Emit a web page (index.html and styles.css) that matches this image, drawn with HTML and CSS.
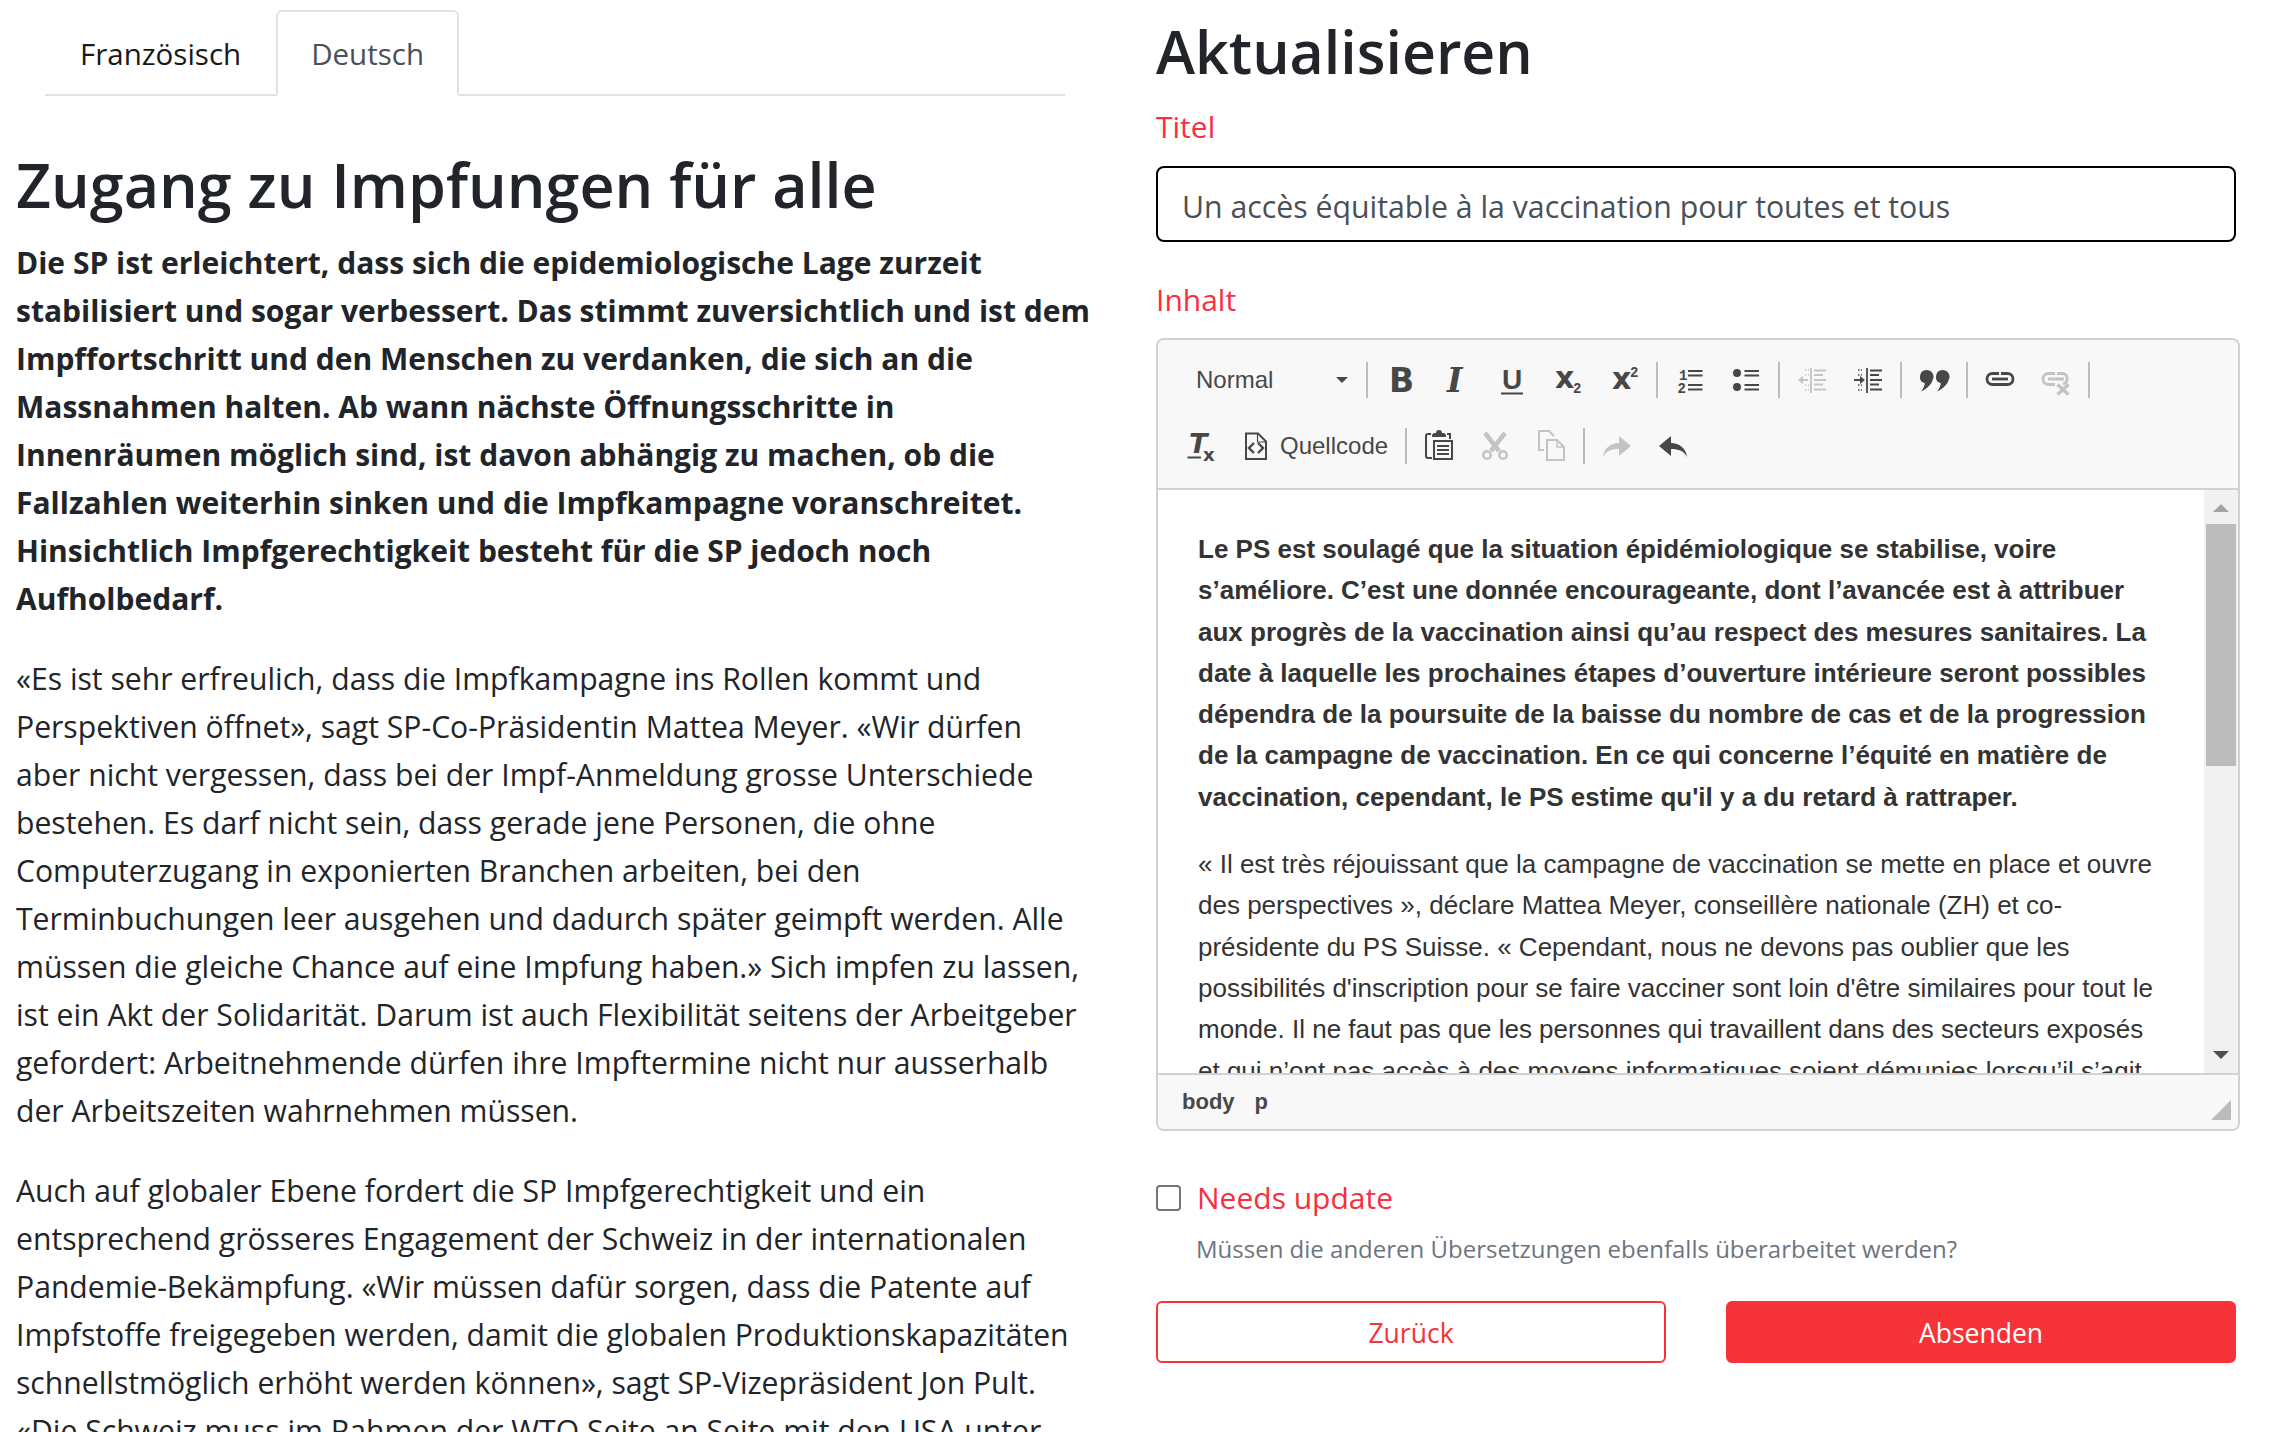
FILE: index.html
```html
<!DOCTYPE html>
<html lang="de">
  <head>
    <meta charset="UTF-8" />
    <title>Aktualisieren</title>
    <link rel="stylesheet" href="styles.css">
  </head>
  <body>
    <main class="page">
      <section class="source">
        <ul class="tabs">
          <li class="tab">Französisch</li>
          <li class="tab active">Deutsch</li>
        </ul>
        <h1 class="source-title">Zugang zu Impfungen für alle</h1>
        <p class="lead">Die SP ist erleichtert, dass sich die epidemiologische Lage zurzeit<br>stabilisiert und sogar verbessert. Das stimmt zuversichtlich und ist dem<br>Impffortschritt und den Menschen zu verdanken, die sich an die<br>Massnahmen halten. Ab wann nächste Öffnungsschritte in<br>Innenräumen möglich sind, ist davon abhängig zu machen, ob die<br>Fallzahlen weiterhin sinken und die Impfkampagne voranschreitet.<br>Hinsichtlich Impfgerechtigkeit besteht für die SP jedoch noch<br>Aufholbedarf.</p>
        <p>«Es ist sehr erfreulich, dass die Impfkampagne ins Rollen kommt und<br>Perspektiven öffnet», sagt SP-Co-Präsidentin Mattea Meyer. «Wir dürfen<br>aber nicht vergessen, dass bei der Impf-Anmeldung grosse Unterschiede<br>bestehen. Es darf nicht sein, dass gerade jene Personen, die ohne<br>Computerzugang in exponierten Branchen arbeiten, bei den<br>Terminbuchungen leer ausgehen und dadurch später geimpft werden. Alle<br>müssen die gleiche Chance auf eine Impfung haben.» Sich impfen zu lassen,<br>ist ein Akt der Solidarität. Darum ist auch Flexibilität seitens der Arbeitgeber<br>gefordert: Arbeitnehmende dürfen ihre Impftermine nicht nur ausserhalb<br>der Arbeitszeiten wahrnehmen müssen.</p>
        <p>Auch auf globaler Ebene fordert die SP Impfgerechtigkeit und ein<br>entsprechend grösseres Engagement der Schweiz in der internationalen<br>Pandemie-Bekämpfung. «Wir müssen dafür sorgen, dass die Patente auf<br>Impfstoffe freigegeben werden, damit die globalen Produktionskapazitäten<br>schnellstmöglich erhöht werden können», sagt SP-Vizepräsident Jon Pult.<br>«Die Schweiz muss im Rahmen der WTO Seite an Seite mit den USA unter</p>
      </section>

      <section class="form">
        <h1 class="form-title">Aktualisieren</h1>
        <label class="label label-title">Titel</label>
        <input class="title-input" type="text" value="Un accès équitable à la vaccination pour toutes et tous">
        <label class="label label-content">Inhalt</label>

        <div class="editor">
          <div class="toolbar">
            <div class="toolbar-row">
              <div class="combo"><span>Normal</span><i class="combo-arrow"></i></div>
              <i class="sep"></i>
              <button class="btn on"><svg viewBox="0 0 32 32"><text x="5" y="28" class="ico-b">B</text></svg></button>
              <button class="btn on"><svg viewBox="0 0 32 32"><text x="7" y="28" class="ico-i">I</text></svg></button>
              <button class="btn on"><svg viewBox="0 0 32 32"><text x="6" y="25" class="ico-u">U</text><path d="M5 29.500h22" stroke="currentColor" stroke-width="2"/></svg></button>
              <button class="btn on"><svg viewBox="0 0 32 32"><text x="3" y="24" class="ico-x">x</text><text x="21" y="29" class="num">2</text></svg></button>
              <button class="btn on"><svg viewBox="0 0 32 32"><text x="4" y="25" class="ico-x">x</text><text x="22" y="13" class="num">2</text></svg></button>
              <i class="sep"></i>
              <button class="btn on"><svg viewBox="0 0 32 32"><text x="5" y="16" class="num">1</text><text x="3.500" y="29" class="num">2</text><path d="M14 7h14.500M14 11.500h14.500M14 21h14.500M14 25.500h14.500" stroke="currentColor" stroke-width="2" fill="none"/></svg></button>
              <button class="btn on"><svg viewBox="0 0 32 32"><circle cx="7" cy="9" r="4" fill="currentColor"/><circle cx="7" cy="23" r="4" fill="currentColor"/><path d="M14.500 7H29M14.500 11.500H29M14.500 21H29M14.500 25.500H29" stroke="currentColor" stroke-width="2" fill="none"/></svg></button>
              <i class="sep"></i>
              <button class="btn off"><svg viewBox="0 0 32 32"><path d="M15 4v25M18 6.500h12M18 11h9M18 16h12M18 20.500h9M18 25.500h12M3 16h9" stroke="currentColor" stroke-width="1.800" fill="none"/><path d="M2 16l5-4v8z" fill="currentColor"/><path d="M9 6h1.500M12 6h1M9 11h1.500M12 11h1M9 21h1.500M12 21h1M9 26h1.500M12 26h1" stroke="currentColor" stroke-width="1.600"/></svg></button>
              <button class="btn on"><svg viewBox="0 0 32 32"><path d="M15 4v25M18 6.500h12M18 11h9M18 16h12M18 20.500h9M18 25.500h12M2 16h8" stroke="currentColor" stroke-width="1.800" fill="none"/><path d="M13 16l-5-4v8z" fill="currentColor"/><path d="M6 6h1.500M9 6h1M6 11h1.500M9 11h1M6 21h1.500M9 21h1M6 26h1.500M9 26h1" stroke="currentColor" stroke-width="1.600"/></svg></button>
              <i class="sep"></i>
              <button class="btn on"><svg viewBox="0 0 32 32"><path d="M8.500 6a6.800 6.800 0 0 1 6.300 9.800C13 21 9 25 3 27.500c2.500-3 3.500-5.500 3.800-8.200A6.800 6.800 0 0 1 8.500 6zM24.500 6a6.800 6.800 0 0 1 6.300 9.800C29 21 25 25 19 27.500c2.500-3 3.500-5.500 3.800-8.200A6.800 6.800 0 0 1 24.500 6z" fill="currentColor"/></svg></button>
              <i class="sep"></i>
              <button class="btn on"><svg viewBox="0 0 32 32"><path d="M15 9.500H8.500a5.500 5.500 0 0 0 0 11H23.500a5.500 5.500 0 0 0 0-11H17" stroke="currentColor" stroke-width="2.800" fill="none"/><path d="M8 15h16" stroke="currentColor" stroke-width="2.800"/></svg></button>
              <button class="btn off"><svg viewBox="0 0 32 32"><path d="M15 9.500H8.500a5.500 5.500 0 0 0 0 11H15M23 20a5.500 5.500 0 0 0 .5-10.500H17M8 15h16" stroke="currentColor" stroke-width="2.800" fill="none"/><path d="M17.500 20.500l11 10M28.500 20.500l-11 10" stroke="currentColor" stroke-width="3.600"/></svg></button>
              <i class="sep"></i>
            </div>
            <div class="toolbar-row">
              <button class="btn on"><svg viewBox="0 0 32 32"><text x="5" y="23" class="ico-t">T</text><path d="M3.500 27.500H17" stroke="currentColor" stroke-width="2"/><text x="19" y="31" class="ico-sx">x</text></svg></button>
              <button class="btn btn-wide on"><svg viewBox="0 0 32 32"><path d="M6 3.500h12l8 8V29H6z" stroke="currentColor" stroke-width="2" fill="none"/><path d="M17.500 3.500v8.500H26" stroke="currentColor" stroke-width="1.200" fill="none"/><path d="M14 13l-5 5 5 5M18 13l5 5-5 5" stroke="currentColor" stroke-width="2.400" fill="none"/></svg><span>Quellcode</span></button>
              <i class="sep"></i>
              <button class="btn on"><svg viewBox="0 0 32 32"><path d="M8 4H5a2 2 0 0 0-2 2v20a2 2 0 0 0 2 2h4M24 4h3v5" stroke="currentColor" stroke-width="2" fill="none"/><path d="M9 6a3 3 0 0 1 3-3h1a3 3 0 0 1 6 0h1a3 3 0 0 1 3 3v1H9z" fill="currentColor"/><path d="M11 11h18v18H11z" stroke="currentColor" stroke-width="2" fill="none"/><path d="M14 16h12M14 20h12M14 24h12" stroke="currentColor" stroke-width="2"/></svg></button>
              <button class="btn off"><svg viewBox="0 0 32 32"><path d="M6 3l14 18M26 3L12 21" stroke="currentColor" stroke-width="4.500" fill="none"/><circle cx="8" cy="25" r="3.800" stroke="currentColor" stroke-width="2.600" fill="none"/><circle cx="24" cy="25" r="3.800" stroke="currentColor" stroke-width="2.600" fill="none"/></svg></button>
              <button class="btn off"><svg viewBox="0 0 32 32"><path d="M9 20H4V1h10l5 5" stroke="currentColor" stroke-width="2" fill="none"/><path d="M12 10h10l7 7v13H12z" stroke="currentColor" stroke-width="2" fill="none"/><path d="M22 10v7h7" stroke="currentColor" stroke-width="1.400" fill="none"/></svg></button>
              <i class="sep"></i>
              <button class="btn off"><svg viewBox="0 0 32 32"><path d="M2 27C3 18 10 13 18 13V6l12 10-12 10v-7C10 19 5 21 2 27z" fill="currentColor"/></svg></button>
              <button class="btn on"><svg viewBox="0 0 32 32"><path d="M30 27C29 18 22 13 14 13V6L2 16l12 10v-7c8 0 13 2 16 8z" fill="currentColor"/></svg></button>
            </div>
          </div>

          <div class="wysiwyg">
            <div class="doc">
              <p><strong>Le PS est soulagé que la situation épidémiologique se stabilise, voire s’améliore. C’est une donnée encourageante, dont l’avancée est à attribuer aux progrès de la vaccination ainsi qu’au respect des mesures sanitaires. La date à laquelle les prochaines étapes d’ouverture intérieure seront possibles dépendra de la poursuite de la baisse du nombre de cas et de la progression de la campagne de vaccination. En ce qui concerne l’équité en matière de vaccination, cependant, le PS estime qu'il y a du retard à rattraper.</strong></p>
              <p>« Il est très réjouissant que la campagne de vaccination se mette en place et ouvre des perspectives », déclare Mattea Meyer, conseillère nationale (ZH) et co-présidente du PS Suisse. « Cependant, nous ne devons pas oublier que les possibilités d'inscription pour se faire vacciner sont loin d'être similaires pour tout le monde. Il ne faut pas que les personnes qui travaillent dans des secteurs exposés et qui n’ont pas accès à des moyens informatiques soient démunies lorsqu’il s’agit</p>
            </div>
            <div class="scrollbar">
              <i class="arrow-up"></i>
              <i class="thumb"></i>
              <i class="arrow-down"></i>
            </div>
          </div>

          <div class="statusbar">
            <span class="crumb">body</span>
            <span class="crumb">p</span>
            <i class="resizer"></i>
          </div>
        </div>

        <label class="check">
          <input class="check-box" type="checkbox">
          <span>Needs update</span>
        </label>
        <p class="help">Müssen die anderen Übersetzungen ebenfalls überarbeitet werden?</p>

        <div class="actions">
          <button class="action outline">Zurück</button>
          <button class="action solid">Absenden</button>
        </div>
      </section>
    </main>
  </body>
</html>
```

FILE: styles.css
```css
html,
body {
  margin: 0;
  height: 1432px;
  overflow: hidden;
  background: #fff;
}

body {
  font: normal 30px/48px "Open Sans", sans-serif;
  color: #212529;
}

.page {
  display: grid;
  grid-template-columns: 1156px 1116px;
  height: 1432px;
}

/* left column */
.source {
  padding-left: 16px;
  overflow: hidden;
  white-space: nowrap;
  font-size: 30.15px;
}

.source p {
  margin: 0 0 32px;
}

.tabs {
  display: flex;
  list-style: none;
  width: 1020px;
  height: 84px;
  margin: 10px 0 0 29px;
  padding: 0;
  border-bottom: 2px solid #dee2e6;
  font-size: 29.5px;
}

.tab {
  box-sizing: border-box;
  height: 86px;
  padding: 0 33px;
  line-height: 84px;
  color: #16181b;
  border: 2px solid transparent;
  border-radius: 6px 6px 0 0;
}

.tab.active {
  color: #495057;
  border-color: #dee2e6;
  border-bottom-color: #fff;
}

.source-title,
.form-title {
  font-weight: 600;
  line-height: 76px;
  margin: 0;
}

.source-title {
  font-size: 61px;
  margin: 51px 0 16px;
}

.source .lead {
  font-size: 30px;
  font-weight: 700;
}

/* right column */
.form {
  padding: 13px 32px 0 0;
}

.form-title {
  font-size: 59px;
  margin-bottom: 14px;
}

.label {
  display: block;
  color: #f92f3d;
  line-height: 48px;
}

.label-content {
  margin: 34px 0 14px;
}

.title-input {
  display: block;
  box-sizing: border-box;
  width: 1080px;
  height: 76px;
  margin: 15px 0 0;
  padding: 4px 24px 0;
  font: normal 30.25px "Open Sans", sans-serif;
  color: #495057;
  border: 2px solid #000;
  border-radius: 8px;
}

/* rich text editor */
.editor {
  width: 1084px;
  box-sizing: border-box;
  border: 2px solid #d1d1d1;
  border-radius: 8px;
  font-family: "Liberation Sans", Arial, sans-serif;
}

.toolbar {
  padding: 7px 0 9px 14px;
  background: #f8f8f8;
  border-bottom: 2px solid #d1d1d1;
  border-radius: 6px 6px 0 0;
}

.toolbar-row {
  display: flex;
  align-items: center;
  height: 66px;
}

.combo {
  display: flex;
  align-items: center;
  justify-content: space-between;
  width: 190px;
  box-sizing: border-box;
  padding: 0 14px 0 24px;
  font-size: 24px;
  color: #484848;
}

.combo-arrow {
  border-top: 6px solid #484848;
  border-left: 6px solid transparent;
  border-right: 6px solid transparent;
}

.sep {
  flex: none;
  width: 2px;
  height: 36px;
  margin: 0 4px;
  background: #bcbcbc;
}

.btn {
  display: flex;
  align-items: center;
  justify-content: center;
  flex: none;
  width: 56px;
  height: 48px;
  padding: 0;
  border: 0;
  background: none;
  font-family: "Liberation Sans", Arial, sans-serif;
}

.btn svg {
  width: 32px;
  height: 32px;
  flex: none;
  overflow: visible;
}

.btn svg text {
  fill: currentColor;
}

.btn-wide {
  width: auto;
  padding: 0 13px 0 12px;
  gap: 8px;
  font-size: 24px;
}

.on {
  color: #474747;
}

.off {
  color: #c4c4c4;
}

.num {
  font: bold 14px "Liberation Mono", monospace;
}

.ico-b {
  font: bold 33px "DejaVu Sans", sans-serif;
}

.ico-i {
  font: italic bold 33px "DejaVu Serif", serif;
}

.ico-u {
  font: bold 28px "Liberation Sans", sans-serif;
}

.ico-x {
  font: bold 30px "DejaVu Sans", sans-serif;
}

.ico-t {
  font: italic bold 27px "DejaVu Sans", sans-serif;
}

.ico-sx {
  font: bold 18px "DejaVu Sans", sans-serif;
}

.wysiwyg {
  display: flex;
  height: 583px;
  background: #fff;
}

.doc {
  flex: 1;
  overflow: hidden;
  padding: 17px 40px 0;
  font-size: 26px;
  line-height: 41.3px;
  color: #333;
}

.doc p {
  margin: 22px 0 26px;
}

.scrollbar {
  display: flex;
  flex-direction: column;
  align-items: center;
  width: 34px;
  background: #f1f1f1;
}

.arrow-up {
  margin-top: 14px;
  border-bottom: 8px solid #a3a3a3;
  border-left: 8px solid transparent;
  border-right: 8px solid transparent;
}

.thumb {
  width: 30px;
  height: 242px;
  margin-top: 12px;
  background: #bcbcbc;
}

.arrow-down {
  margin-top: auto;
  margin-bottom: 14px;
  border-top: 8px solid #505050;
  border-left: 8px solid transparent;
  border-right: 8px solid transparent;
}

.statusbar {
  position: relative;
  display: flex;
  gap: 20px;
  align-items: center;
  height: 54px;
  padding-left: 24px;
  background: #f8f8f8;
  border-top: 2px solid #d1d1d1;
  border-radius: 0 0 6px 6px;
  font-size: 22px;
  font-weight: 700;
  color: #484848;
}

.resizer {
  position: absolute;
  right: 7px;
  bottom: 9px;
  border-bottom: 20px solid #bcbcbc;
  border-left: 20px solid transparent;
}

.check {
  display: flex;
  align-items: center;
  gap: 16px;
  margin-top: 43px;
  color: #f92f3d;
}

.check-box {
  appearance: none;
  width: 25px;
  height: 26px;
  margin: 0;
  border: 2px solid #767676;
  border-radius: 4px;
  background: #fff;
}

.help {
  margin: 7px 0 0 40px;
  font-size: 24px;
  line-height: 40px;
  color: #6c757d;
}

.actions {
  display: grid;
  grid-template-columns: 510px 510px;
  gap: 60px;
  margin-top: 32px;
}

.action {
  height: 62px;
  padding-top: 2px;
  font: normal 26.5px "Open Sans", sans-serif;
  border-radius: 6px;
  border: 2px solid #f53338;
}

.outline {
  background: #fff;
  color: #f53338;
}

.solid {
  background: #f53338;
  color: #fff;
}
```
